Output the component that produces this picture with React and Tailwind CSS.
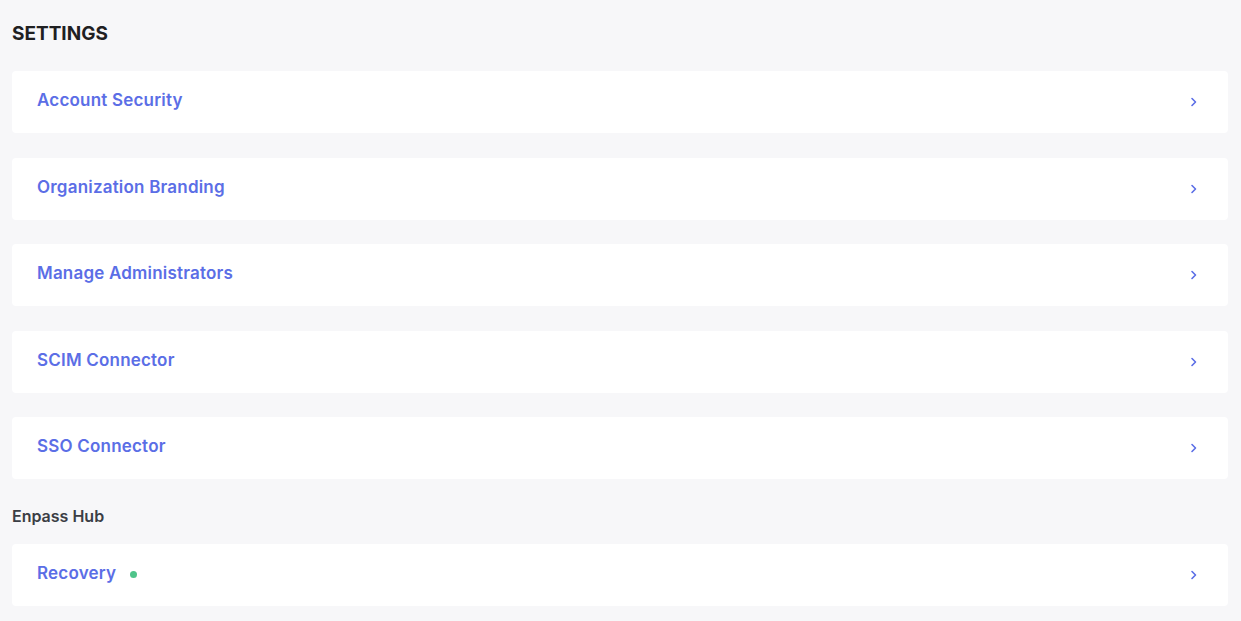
import React from 'react';

const items = [
  'Account Security',
  'Organization Branding',
  'Manage Administrators',
  'SCIM Connector',
  'SSO Connector',
];

function Chevron() {
  return (
    <svg width="8" height="10" viewBox="0 0 8 10" fill="none" className="shrink-0">
      <path d="M2 1.5 L5.5 5 L2 8.5" stroke="#5b6ee6" strokeWidth="1.6" strokeLinecap="round" strokeLinejoin="round" />
    </svg>
  );
}

function Row({ label, dot }) {
  return (
    <div className="flex h-[62px] items-center justify-between rounded-[4px] bg-white pl-[25px] pr-[30px] cursor-pointer">
      <div className="flex items-center gap-[14px] pb-[2px]">
        <span className="text-[17px] font-semibold tracking-[0.2px] text-[#5b6ee6]">{label}</span>
        {dot && <span className="h-[7px] w-[7px] rounded-full bg-[#4fc48a]" />}
      </div>
      <Chevron />
    </div>
  );
}

export default function App() {
  return (
    <div
      className="min-h-[621px] w-full bg-[#f7f7f9] pl-[12px] pr-[13px] pt-[22px] pb-4"
      style={{ fontFamily: 'Inter, "Noto Sans", sans-serif' }}
    >
      <h1 className="text-[19px] font-bold leading-[24px] text-[#1f2022]">SETTINGS</h1>
      <div className="mt-[25px] flex flex-col gap-[24.5px]">
        {items.map((label) => (
          <Row key={label} label={label} />
        ))}
      </div>
      <div className="mt-[27px] text-[16px] font-semibold leading-[20px] text-[#3b3e45]">Enpass Hub</div>
      <div className="mt-[18px]">
        <Row label="Recovery" dot />
      </div>
    </div>
  );
}
